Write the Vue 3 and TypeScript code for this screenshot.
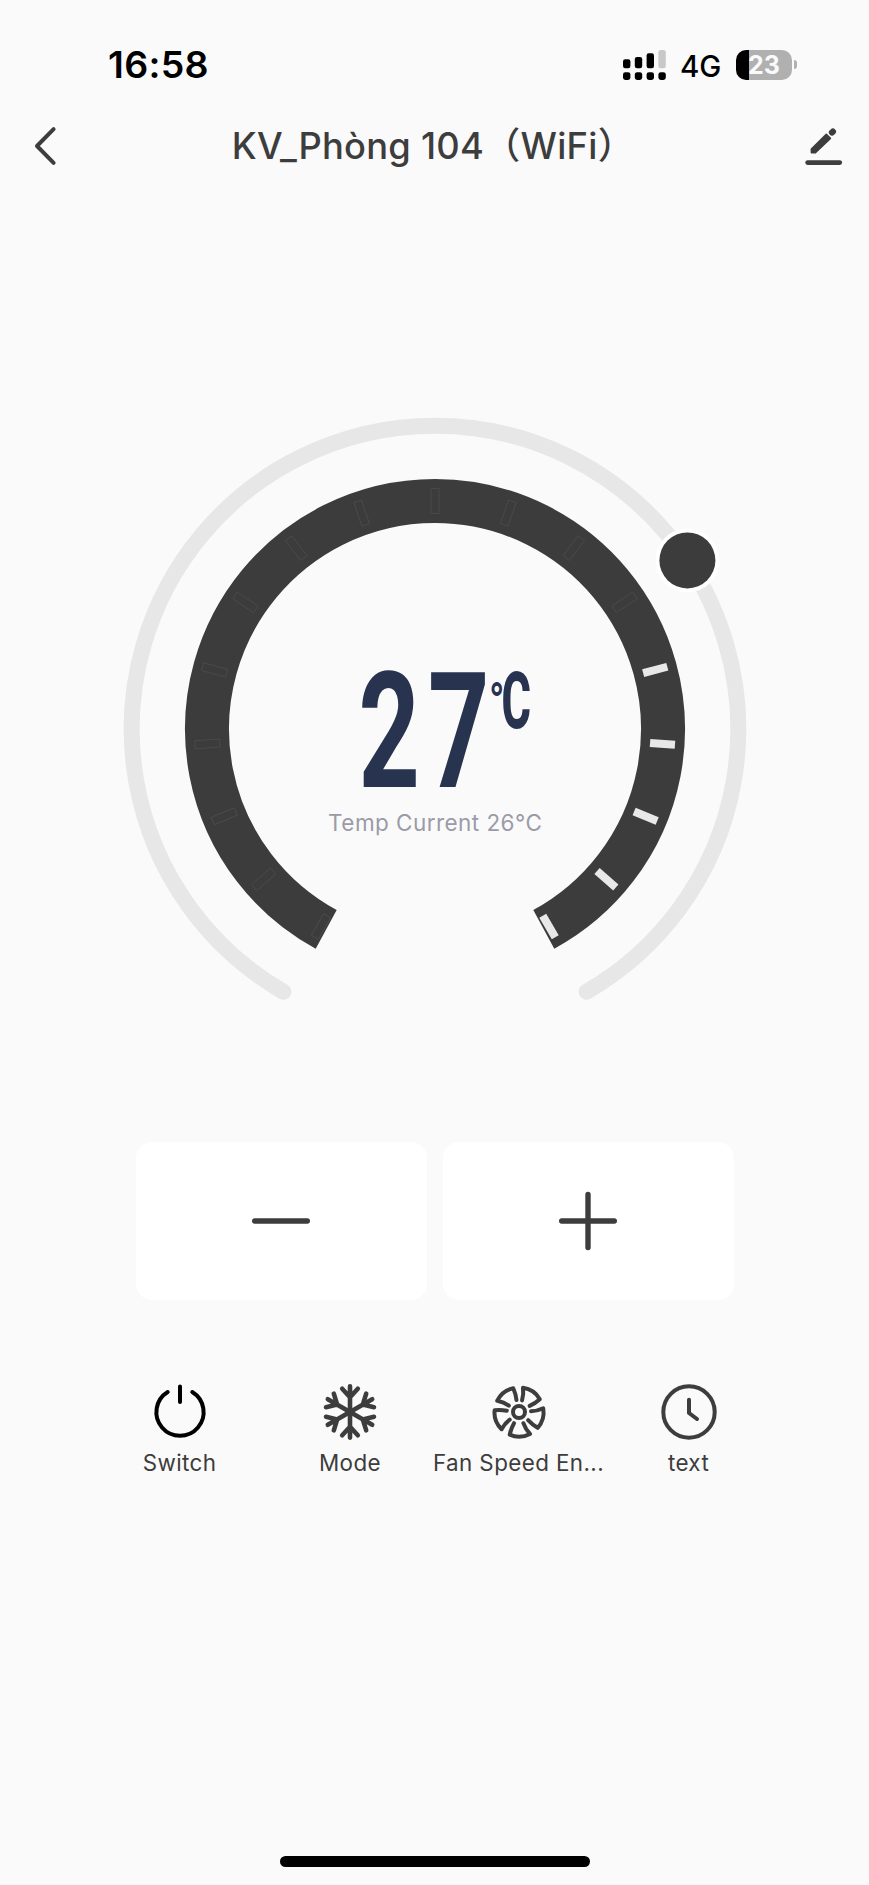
<script setup lang="ts">
interface Tick {
  angle: number
  lit: boolean
}

const title = 'KV_Phòng 104（WiFi）'
const target = 27
const current = 26

// 17 marks spread over 300 degrees, from lower left round to lower right.
const ticks: Tick[] = Array.from({ length: 17 }, (_, i) => ({
  angle: -240 + i * 18.75,
  lit: i > 11,
}))

const bars = [
  { x: 0, top: 9.3, on: true },
  { x: 11.8, top: 7, on: true },
  { x: 23.6, top: 3.3, on: true },
  { x: 35.4, top: 0, on: false },
]

const arms = [0, 60, 120, 180, 240, 300]
const blades = [0, 72, 144, 216, 288]

const actions = [
  { id: 'switch', label: 'Switch' },
  { id: 'mode', label: 'Mode' },
  { id: 'fan', label: 'Fan Speed En...' },
  { id: 'clock', label: 'text' },
]
</script>

<template>
  <main class="screen">
    <header class="status">
      <span class="time">16:58</span>
      <div class="status-right">
        <svg class="signal" width="43" height="30" viewBox="0 0 43 30">
          <g v-for="b in bars" :key="b.x">
            <rect :x="b.x" :y="b.top" width="7.4" :height="18.2 - b.top" rx="2.2" :class="b.on ? 'on' : 'off'" />
            <rect :x="b.x" y="22.2" width="7.4" height="7.8" rx="2.4" class="on" />
          </g>
        </svg>
        <span class="network">4G</span>
        <div class="battery"><span>23</span></div>
        <i class="nub"></i>
      </div>
    </header>

    <nav class="bar">
      <svg class="back" width="30" height="44" viewBox="0 0 30 44">
        <path d="M24.6 5.2 L8 22 L24.6 38.8" />
      </svg>
      <h1>{{ title }}</h1>
      <svg class="edit" width="44" height="44" viewBox="0 0 44 44">
        <path class="body" d="M10.4 28.6 L10.4 25 L25.3 10.4 L29.4 14.4 L14.4 28.6 Z" />
        <path class="tip" d="M31 8.5 L31.9 7.6" />
        <path class="rule" d="M6.6 38.6 H38.8" />
      </svg>
    </nav>

    <section class="dial">
      <svg width="640" height="600" viewBox="-320 -320 640 600">
        <path class="track" d="M-151.6 262.7 A303.3 303.3 0 1 1 151.6 262.7" />
        <path class="ring" d="M-108.8 200.4 A228 228 0 1 1 108.8 200.4" />
        <rect
          v-for="t in ticks"
          :key="t.angle"
          :class="t.lit ? 'tick-lit' : 'tick'"
          x="215.5"
          y="-4"
          width="25"
          height="8"
          :transform="`rotate(${t.angle})`"
        />
        <circle class="halo" cx="252.4" cy="-168.6" r="32" />
        <circle class="knob" cx="252.4" cy="-168.6" r="28" />
        <text class="target" transform="translate(-76.5 57.8) scale(0.66 1)">{{ target }}</text>
        <text class="degree" transform="translate(54 -8) scale(0.74 1)">°</text>
        <text class="letter" transform="translate(66.5 -1) scale(0.57 1)">C</text>
        <text class="current" x="0.2" y="102.3">Temp Current {{ current }}°C</text>
      </svg>
    </section>

    <section class="steps">
      <button type="button">
        <svg width="64" height="64" viewBox="-32 -32 64 64"><path d="M-26.3 0 H26.3" /></svg>
      </button>
      <button type="button">
        <svg width="64" height="64" viewBox="-32 -32 64 64"><path d="M-26.3 0 H26.3 M0 -26.5 V26.5" /></svg>
      </button>
    </section>

    <section class="actions">
      <div v-for="a in actions" :key="a.id" class="action">
        <svg :class="a.id" width="60" height="60" viewBox="-30 -30 60 60">
          <path v-if="a.id === 'switch'" d="M-12.3 -20 A23.6 23.6 0 1 0 12.3 -20 M0 -25.6 V-10" />
          <template v-else-if="a.id === 'mode'">
            <path v-for="r in arms" :key="r" d="M0 0 V-25.6 M-7.8 -23.2 L0 -14.8 L7.8 -23.2" :transform="`rotate(${r})`" />
          </template>
          <template v-else-if="a.id === 'fan'">
            <circle r="6" />
            <path
              v-for="r in blades"
              :key="r"
              d="M-5 11.2 Q-8 16.5 -9.3 22.6 Q0.8 27.2 11 21.9 Q6.3 17 4.4 11.2"
              :transform="`rotate(${r})`"
            />
          </template>
          <template v-else>
            <circle r="25.7" />
            <path d="M0 -12.2 V1 L8 7" />
          </template>
        </svg>
        <span>{{ a.label }}</span>
      </div>
    </section>

    <div class="home"></div>
  </main>
</template>

<style>
body {
  background: #fafafa;
}
</style>

<style scoped>
.screen {
  box-sizing: border-box;
  width: 869px;
  height: 1885px;
  display: flex;
  flex-direction: column;
  background: #fafafa;
  color: #3d3d3d;
  font-family: Inter, 'Noto Sans CJK SC', sans-serif;
  overflow: hidden;
}
.status {
  height: 112px;
  display: flex;
  justify-content: space-between;
  box-sizing: border-box;
  padding: 42px 72px 0 108px;
  color: #000;
}
.time {
  font-size: 37.5px;
  line-height: 46px;
  font-weight: 600;
  letter-spacing: 0.3px;
}
.status-right {
  display: flex;
  align-items: center;
  height: 45px;
}
.on {
  fill: #000;
}
.off {
  fill: #c8c8c8;
}
.network {
  margin: 2px 14px 0 14px;
  width: 42px;
  font-size: 29.5px;
  font-weight: 500;
}
.battery {
  width: 56px;
  height: 30px;
  border-radius: 10px;
  background: linear-gradient(90deg, #000 13px, #b0b0b0 13px);
  color: #fafafa;
  font-size: 25px;
  line-height: 31px;
  font-weight: 700;
  text-align: center;
}
.nub {
  width: 3px;
  height: 9px;
  margin-left: 2px;
  border-radius: 0 4px 4px 0;
  background: #b0b0b0;
}
.bar {
  height: 68px;
  display: flex;
  align-items: center;
  justify-content: space-between;
  padding: 0 29px;
}
.back,
.edit {
  fill: none;
  stroke: #3d3d3d;
  stroke-width: 4;
  stroke-linecap: round;
  stroke-linejoin: round;
}
.edit {
  margin-right: -5px;
}
.edit .body {
  fill: #3d3d3d;
  stroke-width: 1.6;
}
.edit .tip {
  stroke-width: 6.2;
}
.edit .rule {
  stroke-width: 4.6;
}
h1 {
  margin: 0 -3px 0 3px;
  font-size: 36.3px;
  line-height: 60px;
  font-weight: 500;
  letter-spacing: 0.25px;
  white-space: nowrap;
}
.dial {
  display: flex;
  justify-content: center;
  margin-top: 229px;
  height: 600px;
}
.track {
  fill: none;
  stroke: #e7e7e7;
  stroke-width: 16;
  stroke-linecap: round;
}
.ring {
  fill: none;
  stroke: #3c3c3c;
  stroke-width: 44;
}
.tick {
  fill: none;
  stroke: #4c4c4c;
  stroke-width: 0.8;
}
.tick-lit {
  fill: #e8e8e8;
}
.halo {
  fill: #fff;
}
.knob {
  fill: #3c3c3c;
}
.target,
.degree,
.letter {
  fill: #28334f;
  font-family: Roboto, sans-serif;
  font-weight: 700;
}
.target {
  font-size: 162px;
  letter-spacing: 12.4px;
}
.degree {
  font-size: 54px;
}
.letter {
  font-size: 79px;
  font-weight: 800;
}
.current {
  fill: #9b9ba8;
  font-size: 22.5px;
  letter-spacing: 0.45px;
  text-anchor: middle;
}
.steps {
  display: flex;
  gap: 16px;
  margin: 133px 135.5px 0;
}
.steps button {
  flex: 1;
  height: 158px;
  padding: 0;
  border: 0;
  border-radius: 16px;
  background: #fff;
  display: flex;
  align-items: center;
  justify-content: center;
}
.steps path {
  fill: none;
  stroke: #3d3d3d;
  stroke-width: 5.4;
  stroke-linecap: round;
}
.actions {
  display: grid;
  grid-template-columns: 171px 170px 167px 173px;
  margin: 82px 94px 0 94px;
}
.action {
  display: flex;
  flex-direction: column;
  align-items: center;
  font-size: 22.4px;
  line-height: 30px;
  letter-spacing: 0.4px;
  white-space: nowrap;
}
.action span {
  margin-top: 6px;
}
.action svg {
  fill: none;
  stroke: #3d3d3d;
  stroke-width: 4;
  stroke-linecap: round;
  stroke-linejoin: round;
}
.action svg.switch {
  stroke: #000;
}
.action svg.mode {
  stroke-width: 4.6;
}
.home {
  width: 310px;
  height: 11px;
  margin: auto auto 18px;
  border-radius: 6px;
  background: #000;
}
</style>
